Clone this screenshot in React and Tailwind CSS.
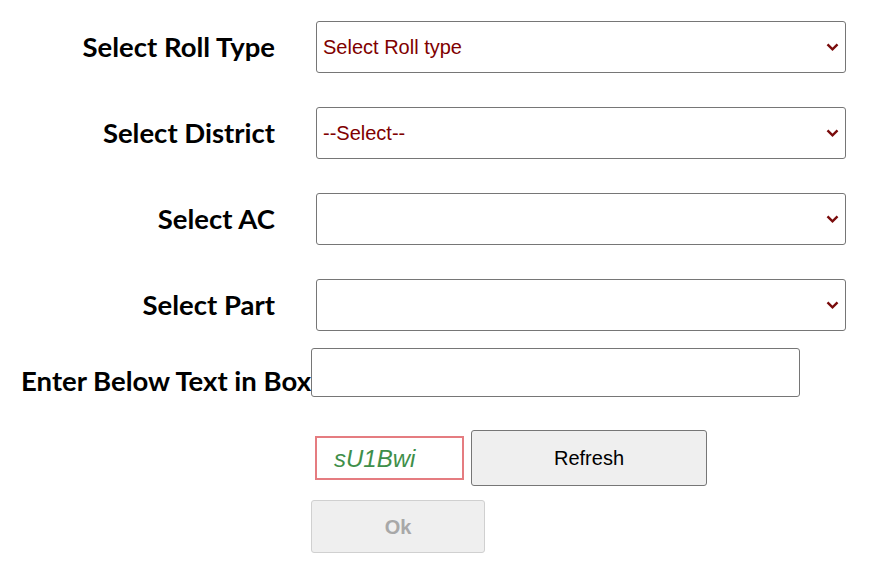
import { useState } from "react";

function Chevron() {
  return (
    <svg width="13" height="9" viewBox="0 0 13 9" className="absolute right-[6px] top-1/2 -translate-y-1/2 pointer-events-none">
      <path d="M1.5 1.8 L6.5 6.8 L11.5 1.8" fill="none" stroke="#7a0c0c" strokeWidth="2.4" />
    </svg>
  );
}

function SelectRow({ label, value, className }) {
  return (
    <div className={"flex items-center " + className}>
      <label className="w-[275px] text-right text-[27.5px] font-bold text-black font-['Lato',sans-serif]">
        {label}
      </label>
      <div className="relative ml-[41px] w-[530px] h-[52px] border border-[#767676] rounded-[3px] bg-white">
        <div className="h-full flex items-center pl-[6px] text-[20px] text-[#800000] font-['Liberation_Sans',Arial,sans-serif]">
          {value}
        </div>
        <Chevron />
      </div>
    </div>
  );
}

export default function App() {
  const [code, setCode] = useState("");

  return (
    <div className="w-[882px] h-[568px] bg-white overflow-hidden pt-[21px]">
      <SelectRow label="Select Roll Type" value="Select Roll type" />
      <SelectRow label="Select District" value="--Select--" className="mt-[34px]" />
      <SelectRow label="Select AC" value="" className="mt-[34px]" />
      <SelectRow label="Select Part" value="" className="mt-[34px]" />

      {/* captcha entry */}
      <div className="flex items-end mt-[17px]">
        <label className="w-[311px] text-right text-[27.5px] font-bold text-black leading-none pb-[3px] font-['Lato',sans-serif] whitespace-nowrap">
          Enter Below Text in Box
        </label>
        <input
          value={code}
          onChange={(e) => setCode(e.target.value)}
          className="w-[489px] h-[49px] border border-[#767676] rounded-[3px] bg-white outline-none px-2"
        />
      </div>

      <div className="flex items-center ml-[315px] mt-[33px] gap-[7px]">
        <div className="w-[149px] h-[44px] border-2 border-[#e57c80] bg-white flex items-center pl-[17px] pt-[2px] text-[24px] italic text-[#3f8f4a] font-['Liberation_Sans',Arial,sans-serif]">
          sU1Bwi
        </div>
        <button className="w-[236px] h-[56px] bg-[#efefef] border border-[#767676] rounded-[3px] text-[20px] text-black font-['Liberation_Sans',Arial,sans-serif]">
          Refresh
        </button>
      </div>

      <button
        disabled
        className="ml-[311px] mt-[14px] w-[174px] h-[53px] bg-[#efefef] border border-[#d0d0d0] rounded-[3px] text-[20px] font-bold text-[#a8a8a8] font-['Liberation_Sans',Arial,sans-serif]"
      >
        Ok
      </button>
    </div>
  );
}
